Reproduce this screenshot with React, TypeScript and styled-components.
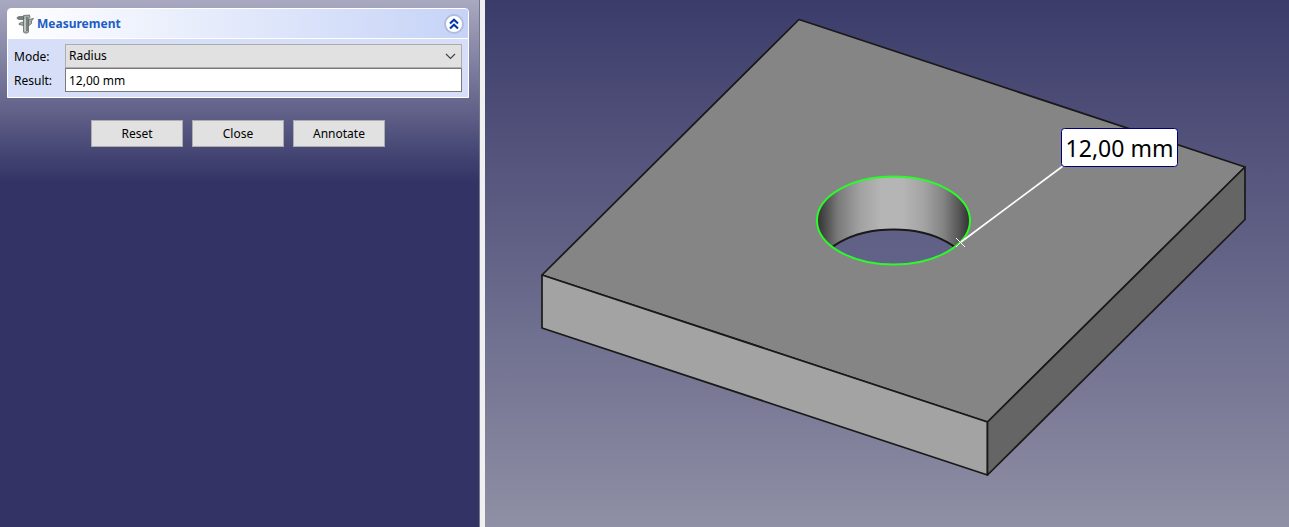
import React, { useState } from "react";
import styled, { createGlobalStyle } from "styled-components";

const GlobalStyle = createGlobalStyle`
  * { box-sizing: border-box; }
  body { margin: 0; background: #333366; }
  body, button, input, select { font: 12px/16px Tahoma, "Noto Sans", sans-serif; color: #000; }
`;

const Workspace = styled.main`
  display: grid;
  grid-template-columns: minmax(320px, 480px) 5px minmax(0, 1fr);
  height: 100vh;
`;

const TaskPanel = styled.aside`
  padding: 8px 10px 8px 7px;
  border-right: 1px solid #75758c;
  background: #333366 linear-gradient(#a9a9c1, #333366) no-repeat top / 100% 182px;
`;

const Splitter = styled.div`
  background: #f0f0f0;
`;

const TaskBox = styled.section`
  border: 1px solid #fff;
  border-radius: 4px 4px 0 0;
  background: #d6dff7;
`;

const TaskHeader = styled.header`
  display: flex;
  align-items: center;
  gap: 2px;
  height: 30px;
  padding: 0 4px 0 8px;
  border-bottom: 1px solid #fff;
  border-radius: 3px 3px 0 0;
  background: linear-gradient(90deg, #fff, #c6d3f7);
`;

const Title = styled.h1`
  flex: 1;
  margin: 0;
  font: bold 12px/16px Tahoma, "Noto Sans", sans-serif;
  color: #215dc6;
`;

const CollapseButton = styled.button`
  display: flex;
  align-items: center;
  justify-content: center;
  width: 20px;
  height: 20px;
  padding: 0;
  border: 2px solid #b3bcdb;
  border-radius: 50%;
  background: #fff;
`;

const Fields = styled.div`
  display: grid;
  grid-template-columns: 51px minmax(0, 1fr);
  align-items: center;
  padding: 5px 6px;
`;

const Label = styled.label`
  padding-top: 1px;
`;

const SelectWrap = styled.div`
  position: relative;
`;

const Select = styled.select`
  display: block;
  width: 100%;
  height: 24px;
  padding: 0 24px 0 3px;
  border: 1px solid #adadad;
  border-radius: 0;
  background: #e1e1e1;
  appearance: none;
`;

const SelectArrow = styled.svg`
  position: absolute;
  top: 9px;
  right: 6px;
  pointer-events: none;
`;

const Input = styled.input`
  display: block;
  width: 100%;
  height: 24px;
  padding: 0 3px;
  border: 1px solid #7a7a7a;
  border-radius: 0;
  background: #fff;
`;

const Actions = styled.div`
  display: flex;
  justify-content: center;
  gap: 9px;
  margin-top: 22px;
`;

const PushButton = styled.button`
  width: 92px;
  height: 27px;
  padding: 0;
  border: 1px solid #adadad;
  background: #e1e1e1;
`;

const Viewport = styled.section`
  overflow: hidden;
  background: linear-gradient(#3c3c6b, #646488 50%, #8f8fa5);
`;

const Scene = styled.svg`
  display: block;
  width: 100%;
  height: 100%;
`;

const CaliperIcon = () => (
  <svg width="19" height="20" viewBox="0 0 19 20" aria-hidden="true">
    <g fill="#a3aca7" stroke="#616a66" strokeWidth=".8" strokeLinejoin="round">
      <path d="M1 3.500 3 2.500H8V5.500H3L1 4.500Z" />
      <path d="M3 9.500Q5 8 8 8V11.500Q5 11 3 10.500Z" />
      <path d="M12.500 5.500 17.500 4.500 15.500 7V9.500L12.500 12Z" />
      <path d="M7.500 1.500 13.500 1 14 3.500 12.500 4.500V18l-1 1H8.500l-1-1Z" />
    </g>
    <path d="M2 4h10" stroke="#4e5753" />
    <path d="M9 3v14" stroke="#d4dcd8" />
    <path d="M10 6h2M10 8h2M10 10h2M10 12h2M10 14h2M10 16h2" stroke="#4c5551" />
  </svg>
);

const CollapseIcon = () => (
  <svg width="12" height="12" viewBox="0 0 12 12" aria-hidden="true">
    <path d="m2 5.500 4-3.700 4 3.700M2 10.500l4-3.700 4 3.700" fill="none" stroke="#0037a5" strokeWidth="2.100" />
  </svg>
);

const PlateScene = () => (
  <Scene viewBox="485 0 804 527" preserveAspectRatio="xMidYMid meet" role="img" aria-label="Plate with a measured hole">
    <defs>
      <linearGradient id="bore">
        <stop offset="0" stopColor="#303030" />
        <stop offset=".06" stopColor="#505050" />
        <stop offset=".14" stopColor="#7b7b7b" />
        <stop offset=".28" stopColor="#a1a1a1" />
        <stop offset=".42" stopColor="#b5b5b5" />
        <stop offset=".56" stopColor="#b5b5b5" />
        <stop offset=".7" stopColor="#a3a3a3" />
        <stop offset=".83" stopColor="#828282" />
        <stop offset=".93" stopColor="#555" />
        <stop offset="1" stopColor="#303030" />
      </linearGradient>
      <linearGradient id="through" x1="0" y1="0" x2="0" y2="1">
        <stop stopColor="#606087" />
        <stop offset="1" stopColor="#66668a" />
      </linearGradient>
      <clipPath id="hole"><ellipse cx="893.5" cy="220.5" rx="76.5" ry="44" /></clipPath>
    </defs>
    <g stroke="#191919" strokeWidth="1.7" strokeLinejoin="round">
      <path d="M799 19.5 1245 167 987.500 422 542 275Z" fill="#858585" />
      <path d="M542 275 987.500 422V475L542 328Z" fill="#a3a3a3" />
      <path d="M987.500 422 1245 167V219.500L987.500 475Z" fill="#656565" />
    </g>
    <ellipse cx="893.5" cy="220.500" rx="76.500" ry="44" fill="url(#bore)" />
    <g clipPath="url(#hole)">
      <ellipse cx="893.500" cy="273.500" rx="76.500" ry="44" fill="url(#through)" stroke="#191919" strokeWidth="2" />
    </g>
    <ellipse cx="893.500" cy="220.500" rx="76.500" ry="44" fill="none" stroke="#2bfa2b" strokeWidth="2" />
    <path d="M961 242 1063 166" stroke="#fff" strokeWidth="1.700" />
    <path d="m956 238 9 9m0-9-9 9" stroke="#fff" />
    <rect x="1061.500" y="128.500" width="116" height="38" rx="3" fill="#fff" stroke="#00007f" />
    <text x="1119.500" y="157" textAnchor="middle" fontFamily='Tahoma, "Noto Sans", sans-serif' fontSize="23">12,00 mm</text>
  </Scene>
);

export default function App() {
  const [open, setOpen] = useState(true);
  const [result, setResult] = useState("12,00 mm");

  return (
    <>
      <GlobalStyle />
      <Workspace>
        <TaskPanel>
          <TaskBox>
            <TaskHeader>
              <CaliperIcon />
              <Title>Measurement</Title>
              <CollapseButton type="button" aria-label="Toggle measurement" aria-expanded={open} onClick={() => setOpen(!open)}>
                <CollapseIcon />
              </CollapseButton>
            </TaskHeader>
            {open && (
              <Fields>
                <Label htmlFor="mode">Mode:</Label>
                <SelectWrap>
                  <Select id="mode" defaultValue="Radius">
                    <option>Radius</option>
                  </Select>
                  <SelectArrow width="11" height="7" viewBox="0 0 11 7" aria-hidden="true">
                    <path d="m1 1 4.500 4.500L10 1" fill="none" stroke="#444" strokeWidth="1.200" />
                  </SelectArrow>
                </SelectWrap>
                <Label htmlFor="result">Result:</Label>
                <Input id="result" value={result} onChange={(e) => setResult(e.target.value)} />
              </Fields>
            )}
          </TaskBox>
          <Actions>
            <PushButton type="button" onClick={() => setResult("")}>Reset</PushButton>
            <PushButton type="button">Close</PushButton>
            <PushButton type="button">Annotate</PushButton>
          </Actions>
        </TaskPanel>
        <Splitter />
        <Viewport>
          <PlateScene />
        </Viewport>
      </Workspace>
    </>
  );
}
